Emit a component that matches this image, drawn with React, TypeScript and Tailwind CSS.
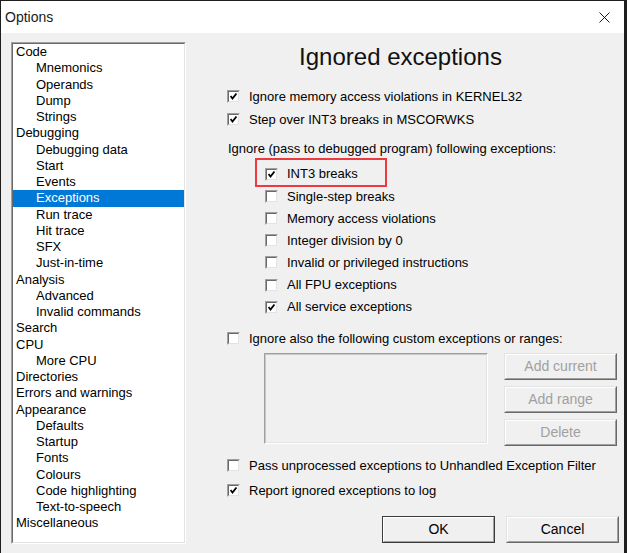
import type { ReactNode } from 'react'

type TreeItem = {
  label: string
  level: number
}

const TREE_ITEMS: TreeItem[] = [
  { label: 'Code', level: 0 },
  { label: 'Mnemonics', level: 1 },
  { label: 'Operands', level: 1 },
  { label: 'Dump', level: 1 },
  { label: 'Strings', level: 1 },
  { label: 'Debugging', level: 0 },
  { label: 'Debugging data', level: 1 },
  { label: 'Start', level: 1 },
  { label: 'Events', level: 1 },
  { label: 'Exceptions', level: 1 },
  { label: 'Run trace', level: 1 },
  { label: 'Hit trace', level: 1 },
  { label: 'SFX', level: 1 },
  { label: 'Just-in-time', level: 1 },
  { label: 'Analysis', level: 0 },
  { label: 'Advanced', level: 1 },
  { label: 'Invalid commands', level: 1 },
  { label: 'Search', level: 0 },
  { label: 'CPU', level: 0 },
  { label: 'More CPU', level: 1 },
  { label: 'Directories', level: 0 },
  { label: 'Errors and warnings', level: 0 },
  { label: 'Appearance', level: 0 },
  { label: 'Defaults', level: 1 },
  { label: 'Startup', level: 1 },
  { label: 'Fonts', level: 1 },
  { label: 'Colours', level: 1 },
  { label: 'Code highlighting', level: 1 },
  { label: 'Text-to-speech', level: 1 },
  { label: 'Miscellaneous', level: 0 },
]

const SELECTED = 'Exceptions'

const EXCEPTIONS = [
  { label: 'Single-step breaks', checked: false },
  { label: 'Memory access violations', checked: false },
  { label: 'Integer division by 0', checked: false },
  { label: 'Invalid or privileged instructions', checked: false },
  { label: 'All FPU exceptions', checked: false },
  { label: 'All service exceptions', checked: true },
]

export default function App() {
  return (
    <div className="h-[553px] w-[627px] overflow-hidden bg-[#1e1e1e] pt-px font-['Liberation_Sans',Arial,sans-serif] text-[13px] text-black">
      <div className="ml-px flex h-[552px] w-[623px] flex-col bg-[#f0f0f0]">
        <TitleBar />
        <div className="flex pl-[10px] pt-[9px]">
          <TreeList />
          <ExceptionsPanel />
        </div>
      </div>
    </div>
  )
}

function TitleBar() {
  return (
    <div className="flex h-[32px] items-center justify-between bg-white pl-[4px] pr-[14px]">
      <span className="text-[14px] text-[#1a1a1a]">Options</span>
      <svg width="11" height="11" viewBox="0 0 11 11" className="mt-px">
        <path d="M0.5 0.5 L10.5 10.5 M10.5 0.5 L0.5 10.5" stroke="#1a1a1a" strokeWidth="1" />
      </svg>
    </div>
  )
}

function TreeList() {
  return (
    <div className="h-[502px] w-[175px] border border-b-white border-l-[#a0a0a0] border-r-white border-t-[#a0a0a0]">
      <div className="h-full border border-b-[#e3e3e3] border-l-[#696969] border-r-[#e3e3e3] border-t-[#696969] bg-white">
        {TREE_ITEMS.map(renderTreeItem)}
      </div>
    </div>
  )
}

function renderTreeItem(item: TreeItem) {
  const selected = item.label === SELECTED
  return (
    <div
      key={item.label}
      className={
        'h-[16.25px] whitespace-nowrap leading-[16.25px] ' +
        (item.level === 0 ? 'pl-[3px] ' : 'pl-[23px] ') +
        (selected ? 'bg-[#0078d7] text-white' : '')
      }
    >
      {item.label}
    </div>
  )
}

function ExceptionsPanel() {
  return (
    <div className="flex flex-1 flex-col pl-[41px]">
      <h1 className="mt-[1px] h-[28px] pr-[50px] text-center text-[24px] leading-[28px] text-[#111]">
        Ignored exceptions
      </h1>
      <div className="mt-[14px]">
        <CheckRow checked label="Ignore memory access violations in KERNEL32" tall />
        <CheckRow checked label="Step over INT3 breaks in MSCORWKS" tall />
      </div>
      <div className="mt-[7px] flex h-[22px] items-center pl-px">
        Ignore (pass to debugged program) following exceptions:
      </div>
      <div className="mt-[3px] pl-[38px]">
        <div className="relative">
          <div className="pointer-events-none absolute left-[-10px] top-[-5px] h-[29px] w-[132px] border-2 border-[#ec3a40]" />
          <CheckRow checked label="INT3 breaks" />
        </div>
        {EXCEPTIONS.map((e) => (
          <CheckRow key={e.label} checked={e.checked} label={e.label} />
        ))}
      </div>
      <div className="mt-[9px]">
        <CheckRow checked={false} label="Ignore also the following custom exceptions or ranges:" />
      </div>
      <div className="mt-[3px] flex pl-[37px]">
        <div className="h-[91px] w-[224px] border border-b-white border-l-[#a0a0a0] border-r-white border-t-[#a0a0a0]">
          <div className="h-full border border-b-[#e3e3e3] border-l-[#c8c8c8] border-r-[#e3e3e3] border-t-[#c8c8c8] bg-[#f0f0f0]" />
        </div>
        <div className="ml-[16px] flex flex-col gap-[6px]">
          <WinButton disabled>Add current</WinButton>
          <WinButton disabled>Add range</WinButton>
          <WinButton disabled>Delete</WinButton>
        </div>
      </div>
      <div className="mt-[9px]">
        <CheckRow checked={false} label="Pass unprocessed exceptions to Unhandled Exception Filter" />
        <div className="mt-[3px]">
          <CheckRow checked label="Report ignored exceptions to log" />
        </div>
      </div>
      <div className="mt-[14px] flex gap-[11px] pl-[155px]">
        <WinButton isDefault>OK</WinButton>
        <WinButton>Cancel</WinButton>
      </div>
    </div>
  )
}

function CheckRow({ checked, label, tall }: { checked: boolean; label: string; tall?: boolean }) {
  return (
    <div className={'flex items-center whitespace-nowrap ' + (tall ? 'h-[23px]' : 'h-[22.2px]')}>
      <CheckBox checked={checked} />
      <span className="ml-[9px]">{label}</span>
    </div>
  )
}

function CheckBox({ checked }: { checked: boolean }) {
  return (
    <div className="h-[13px] w-[13px] shrink-0 border border-b-[#f0f0f0] border-l-[#a0a0a0] border-r-[#f0f0f0] border-t-[#a0a0a0]">
      <div className="flex h-full w-full items-center justify-center border border-b-[#e3e3e3] border-l-[#696969] border-r-[#e3e3e3] border-t-[#696969] bg-white">
        {checked && (
          <svg width="7" height="7" viewBox="0 0 7 7">
            <path d="M0.5 3 L2.5 5.5 L6.5 0.5" fill="none" stroke="#000" strokeWidth="1.8" />
          </svg>
        )}
      </div>
    </div>
  )
}

function WinButton({
  children,
  disabled,
  isDefault,
}: {
  children: ReactNode
  disabled?: boolean
  isDefault?: boolean
}) {
  return (
    <button
      type="button"
      className={
        'h-[27px] w-[113px] border ' +
        (isDefault
          ? 'border-[#3c3c3c]'
          : 'border-b-[#696969] border-l-[#e3e3e3] border-r-[#696969] border-t-[#e3e3e3]')
      }
    >
      <div
        className={
          'flex h-full w-full items-center justify-center border border-b-[#a0a0a0] border-l-white border-r-[#a0a0a0] border-t-white bg-[#f0f0f0] text-[14px] ' +
          (disabled ? 'text-[#a0a0a0]' : 'text-black')
        }
      >
        {children}
      </div>
    </button>
  )
}
